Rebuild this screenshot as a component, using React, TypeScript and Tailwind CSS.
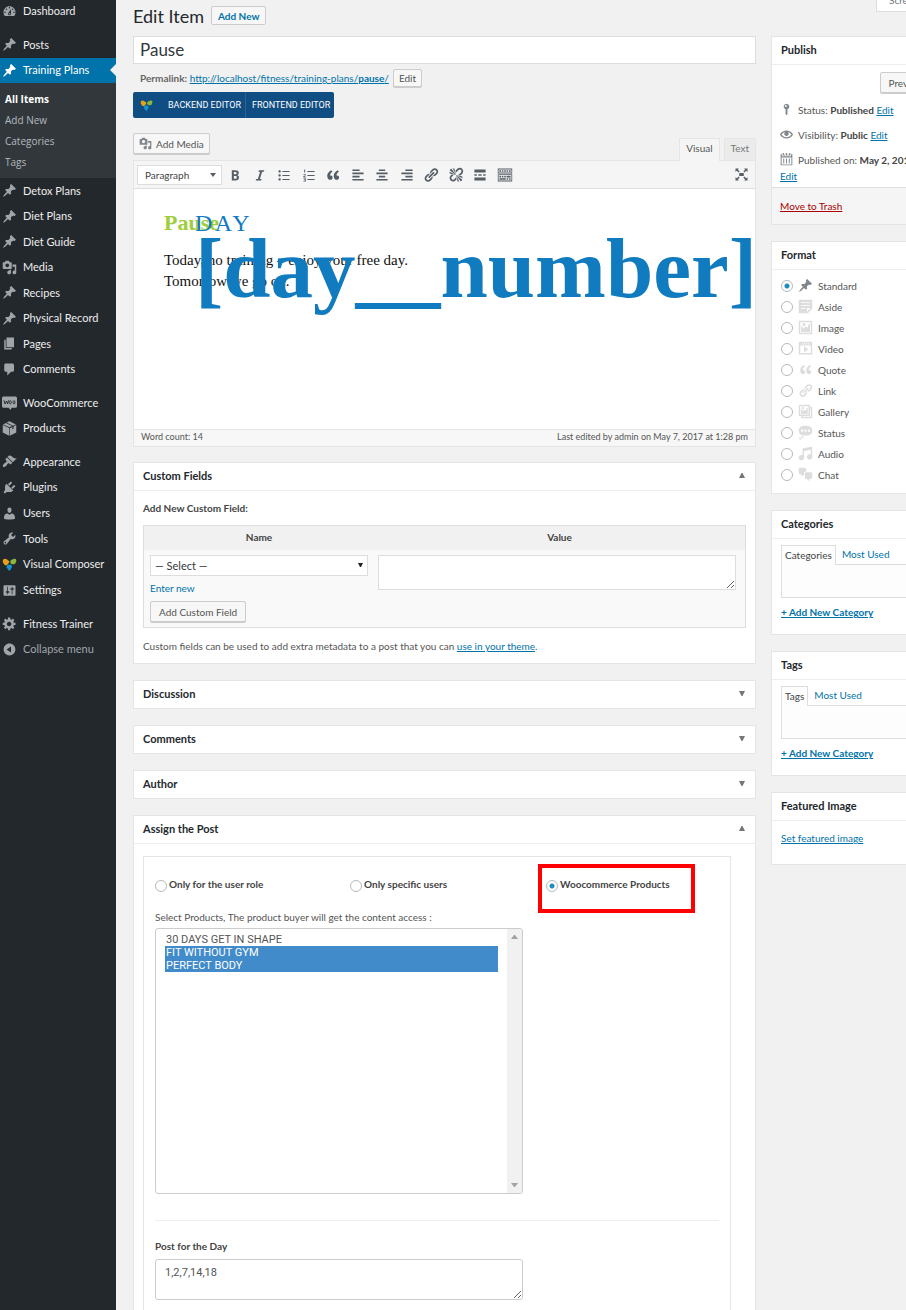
import React from "react";

const PATHS = {
  dashboard:
    "M3.76 16h12.48c1.1-1.37 1.76-3.11 1.76-5 0-4.42-3.58-8-8-8s-8 3.58-8 8c0 1.89.66 3.63 1.76 5zM10 4c.55 0 1 .45 1 1s-.45 1-1 1-1-.45-1-1 .45-1 1-1zM6 6c.55 0 1 .45 1 1s-.45 1-1 1-1-.45-1-1 .45-1 1-1zm8 0c.55 0 1 .45 1 1s-.45 1-1 1-1-.45-1-1 .45-1 1-1zm-5.37 5.55L12 7v6c0 1.1-.9 2-2 2s-2-.9-2-2c0-.57.24-1.08.63-1.45zM4 10c.55 0 1 .45 1 1s-.45 1-1 1-1-.45-1-1 .45-1 1-1zm12 0c.55 0 1 .45 1 1s-.45 1-1 1-1-.45-1-1 .45-1 1-1zm-5 3c0-.55-.45-1-1-1s-1 .45-1 1 .45 1 1 1 1-.45 1-1z",
  pin: "M10.44 3.02l1.82-1.82 6.36 6.35-1.83 1.82c-1.05-.68-2.48-.57-3.41.36l-.75.75c-.92.93-1.04 2.35-.35 3.41l-1.83 1.82-2.41-2.41-2.8 2.79c-.42.42-3.38 2.71-3.8 2.29s1.86-3.39 2.28-3.81l2.79-2.79L4.1 9.36l1.83-1.82c1.05.69 2.48.57 3.4-.36l.75-.75c.93-.92 1.05-2.35.36-3.41z",
  media:
    "M13 11V4c0-.55-.45-1-1-1h-1.67L9 1H5L3.67 3H2c-.55 0-1 .45-1 1v7c0 .55.45 1 1 1h10c.55 0 1-.45 1-1zM7 4.5c1.38 0 2.5 1.12 2.5 2.5S8.38 9.5 7 9.5 4.5 8.38 4.5 7 5.62 4.5 7 4.5zM14 6h5v10.5c0 1.38-1.12 2.5-2.5 2.5S14 17.88 14 16.5s1.12-2.5 2.5-2.5c.17 0 .34.02.5.05V9h-3V6zm-4 8.05V13h2v3.5c0 1.38-1.12 2.5-2.5 2.5S7 17.88 7 16.5 8.12 14 9.5 14c.17 0 .34.02.5.05z",
  page: "M6 15V2h10v13H6zm-1 1h8v2H3V5h2v11z",
  comment:
    "M5 2h9c1.1 0 2 .9 2 2v7c0 1.1-.9 2-2 2h-2l-5 5v-5H5c-1.1 0-2-.9-2-2V4c0-1.1.9-2 2-2z",
  product:
    "M6 2L10 .3l8.600 4.200-4 1.900zM4.900 2.600l8.500 4L10 8.300 1.400 4.500zM1 5.400l8.600 3.900v10.200L1 15.200zM19 5.400l-3.700 1.800v3l-1.500.7v-3l-3.400 1.600v10l8.600-4.300z",
  appearance:
    "M14.48 11.06L7.41 3.99l1.5-1.5c.5-.56 2.3-.47 3.51.32 1.21.8 1.43 1.28 2.91 2.1 1.18.64 2.45 1.26 4.45.85zm-.71.71L6.7 4.7 4.93 6.47c-.39.39-.39 1.02 0 1.41l1.06 1.06c.39.39.39 1.03 0 1.42-.6.6-1.43 1.11-2.21 1.69-.35.26-.7.53-1.01.84C1.43 14.23.4 16.08 1.4 17.07c.99 1 2.84-.03 4.18-1.36.31-.31.58-.66.85-1.02.57-.78 1.08-1.61 1.69-2.21.39-.39 1.02-.39 1.41 0l1.06 1.06c.39.39 1.02.39 1.41 0z",
  plugin:
    "M13.11 4.36L9.87 7.6 8 5.73l3.24-3.24c.35-.34 1.05-.2 1.56.32.52.51.66 1.21.31 1.55zm-8 1.77l.91-1.12 9.01 9.01-1.19.84c-.71.71-2.63 1.16-3.82 1.16H6.14L4.9 17.26c-.59.59-1.54.59-2.12 0-.59-.58-.59-1.53 0-2.12l1.24-1.24v-3.88c0-1.13.4-3.19 1.09-3.89zm7.26 3.97l3.24-3.24c.34-.35 1.04-.21 1.55.31.52.51.66 1.21.31 1.55l-3.24 3.25z",
  user: "M10 9.25c-2.27 0-2.73-3.44-2.73-3.44C7 4.02 7.82 2 9.97 2c2.16 0 2.98 2.02 2.71 3.81 0 0-.41 3.44-2.68 3.44zm0 2.57L12.72 10c2.39 0 4.52 2.33 4.52 4.53v2.49s-3.65 1.13-7.24 1.13c-3.65 0-7.24-1.13-7.24-1.13v-2.49c0-2.25 1.94-4.48 4.47-4.48z",
  tool: "M16.68 9.77c-1.34 1.34-3.3 1.67-4.95.99l-5.41 6.52c-.99.99-2.59.99-3.58 0s-.99-2.59 0-3.57l6.52-5.42c-.68-1.65-.35-3.61.99-4.95 1.28-1.28 3.12-1.62 4.72-1.06l-2.89 2.89 2.82 2.82 2.86-2.87c.53 1.58.18 3.39-1.08 4.65zM3.81 16.21c.4.39 1.04.39 1.43 0 .4-.4.4-1.04 0-1.43-.39-.4-1.03-.4-1.43 0-.39.39-.39 1.03 0 1.43z",
  settings:
    "M18 16V4c0-.55-.45-1-1-1H3c-.55 0-1 .45-1 1v12c0 .55.45 1 1 1h14c.55 0 1-.45 1-1zM8 11h1c.55 0 1 .45 1 1s-.45 1-1 1H8v1.5c0 .28-.22.5-.5.5s-.5-.22-.5-.5V13H6c-.55 0-1-.45-1-1s.45-1 1-1h1V5.5c0-.28.22-.5.5-.5s.5.22.5.5V11zm5-2h-1c-.55 0-1-.45-1-1s.45-1 1-1h1V5.5c0-.28.22-.5.5-.5s.5.22.5.5V7h1c.55 0 1 .45 1 1s-.45 1-1 1h-1v5.5c0 .28-.22.5-.5.5s-.5-.22-.5-.5V9z",
  gear: "M18 12h-2.18c-.17.7-.44 1.35-.81 1.93l1.54 1.54-2.1 2.1-1.54-1.54c-.58.36-1.23.63-1.91.79V19H8v-2.18c-.68-.16-1.33-.43-1.91-.79l-1.54 1.54-2.12-2.12 1.54-1.54c-.36-.58-.63-1.23-.79-1.91H1V9.03h2.17c.16-.7.44-1.35.8-1.94L2.43 5.55l2.1-2.1 1.54 1.54c.58-.37 1.24-.64 1.93-.81V2h3v2.18c.68.16 1.33.43 1.91.79l1.54-1.54 2.12 2.12-1.54 1.54c.36.59.64 1.24.8 1.94H18V12zm-8.5 1.5c1.66 0 3-1.34 3-3s-1.34-3-3-3-3 1.34-3 3 1.34 3 3 3z",
  collapse:
    "M10 2.16c4.33 0 7.84 3.51 7.84 7.84s-3.51 7.84-7.84 7.84S2.16 14.33 2.16 10 5.71 2.16 10 2.16zm2 11.72V6.12L6.18 9.97z",
  bold: "M6 4v13h4.54c1.37 0 2.46-.33 3.26-1 .8-.66 1.2-1.58 1.2-2.77 0-.84-.17-1.51-.51-2.01s-.9-.85-1.67-1.03v-.09c.57-.1 1.02-.4 1.36-.9s.51-1.13.51-1.91c0-1.14-.39-1.98-1.17-2.5C12.75 4.26 11.5 4 9.78 4H6zm2.57 5.15V6.26h1.36c.73 0 1.27.11 1.61.32.34.22.51.58.51 1.07 0 .54-.16.92-.47 1.15s-.82.35-1.51.35h-1.5zm0 2.19h1.6c1.44 0 2.16.53 2.16 1.61 0 .6-.17 1.05-.51 1.34s-.86.43-1.57.43H8.57v-3.38z",
  italic: "M14.78 6h-2.13l-2.8 9h2.12l-.62 2H4.6l.62-2h2.14l2.8-9H8.03l.62-2h6.75z",
  ul: "M4.5 7C3.67 7 3 6.33 3 5.5 3 4.68 3.67 4 4.5 4 5.32 4 6 4.68 6 5.5 6 6.33 5.32 7 4.5 7zM8 5h9v1.3H8V5zm-3.5 7c-.83 0-1.5-.67-1.5-1.5C3 9.68 3.67 9 4.5 9c.82 0 1.5.68 1.5 1.5 0 .83-.68 1.5-1.5 1.5zM8 10h9v1.3H8V10zm-3.5 7c-.83 0-1.5-.67-1.5-1.5 0-.82.67-1.5 1.5-1.5.82 0 1.5.68 1.5 1.5 0 .83-.68 1.5-1.5 1.5zM8 15h9v1.3H8V15z",
  ol: "M4 3h1.2v4H4zM3 9h3v1.6H4.6V12H6v1H3v-1.8h1.4V10H3zM3 14h3v4H3v-.8h1.8v-.8H3.6v-.8h1.2v-.8H3zM8 5h9v1.3H8zM8 10h9v1.3H8zM8 15h9v1.3H8z",
  quote:
    "M9.49 13.22c0-.74-.2-1.38-.61-1.9-.62-.78-1.83-.88-2.53-.72-.29-1.65 1.11-3.75 2.92-4.65L7.88 4c-2.73 1.3-5.42 4.28-4.96 8.05C3.21 14.43 4.59 16 6.54 16c.85 0 1.56-.25 2.12-.75s.83-1.18.83-2.03zm8.05 0c0-.74-.2-1.38-.61-1.9-.63-.78-1.83-.88-2.53-.72-.29-1.65 1.11-3.75 2.92-4.65L15.93 4c-2.73 1.3-5.41 4.28-4.95 8.05.29 2.38 1.66 3.95 3.61 3.95.85 0 1.56-.25 2.12-.75s.83-1.18.83-2.03z",
  left: "M12 5V3H3v2h9zm5 4V7H3v2h14zm-5 4v-2H3v2h9zm5 4v-2H3v2h14z",
  center: "M14 5V3H6v2h8zm3 4V7H3v2h14zm-3 4v-2H6v2h8zm3 4v-2H3v2h14z",
  right: "M17 5V3H8v2h9zm0 4V7H3v2h14zm0 4v-2H8v2h9zm0 4v-2H3v2h14z",
  link: "M17.74 2.76c1.68 1.69 1.68 4.41 0 6.1l-1.53 1.52c-1.12 1.12-2.7 1.47-4.14 1.09l2.62-2.61.76-.77.76-.76c.84-.84.84-2.2 0-3.04-.84-.85-2.2-.85-3.04 0l-.77.76-3.38 3.38c-.37-1.44-.02-3.02 1.1-4.14l1.52-1.53c1.69-1.68 4.42-1.68 6.1 0zM8.59 13.43l5.34-5.34c.42-.42.42-1.1 0-1.52-.44-.43-1.13-.39-1.53 0l-5.33 5.34c-.42.42-.42 1.1 0 1.52.44.43 1.13.39 1.52 0zm-.76 2.29l4.14-4.15c.38 1.44.03 3.02-1.09 4.14l-1.52 1.53c-1.69 1.68-4.41 1.68-6.1 0-1.68-1.68-1.68-4.42 0-6.1l1.53-1.52c1.12-1.12 2.7-1.47 4.14-1.1l-4.14 4.15c-.85.84-.85 2.2 0 3.05.84.84 2.2.84 3.04 0z",
  unlink:
    "M17.74 2.26c1.68 1.69 1.68 4.41 0 6.1l-1.53 1.52c-.32.33-.69.58-1.08.77L13 10l1.69-1.64.76-.77.76-.76c.84-.84.84-2.2 0-3.04-.84-.85-2.2-.85-3.04 0l-.77.76-.76.76L10 7l-.65-2.14c.19-.38.44-.75.77-1.07l1.52-1.53c1.69-1.68 4.42-1.68 6.1 0zM2 4l8 6-6-8zm4-2l4 8-2-8H6zM2 6l8 4-8-2V6zm7.36 7.69L10 13l.74 2.35-1.38 1.39c-1.69 1.68-4.41 1.68-6.1 0-1.68-1.68-1.68-4.42 0-6.1l1.39-1.38L7 10l-.69.64-1.52 1.53c-.85.84-.85 2.2 0 3.04.84.85 2.2.85 3.04 0zM18 16l-8-6 6 8zm-4 2l-4-8 2 8h2zm4-4l-8-4 8 2v2z",
  more: "M17 7V3H3v4h14zM6 11V9H3v2h3zm6 0V9H8v2h4zm5 0V9h-3v2h3zm0 6v-4H3v4h14z",
  sink: "M19 2v6H1V2h18zm-1 5V3H2v4h16zM5 4v2H3V4h2zm3 0v2H6V4h2zm3 0v2H9V4h2zm3 0v2h-2V4h2zm3 0v2h-2V4h2zm2 5v9H1V9h18zm-1 8v-7H2v7h16zM5 11v2H3v-2h2zm3 0v2H6v-2h2zm3 0v2H9v-2h2zm6 0v2h-5v-2h5zm-6 3v2H3v-2h8zm3 0v2h-2v-2h2zm3 0v2h-2v-2h2z",
  expand:
    "M2 2h4.500L5.200 3.500 7.500 6 6.300 7.200 3.700 5 2 6.500zM18 2v4.500L16.300 5l-2.600 2.200L12.500 6l2.300-2.500L13.500 2zM2 18v-4.500L3.700 15l2.600-2.200L7.500 14l-2.300 2.500L6.500 18zM18 18h-4.500l1.300-1.500-2.300-2.500 1.200-1.200 2.600 2.200 1.700-1.500zM7 8h6v4H7z",
  aside:
    "M1 1h18v12l-6 6H1V1zm3 3v1h12V4H4zm0 4v1h12V8H4zm6 5v-1H4v1h6zm2 4l5-5h-5v5z",
  image:
    "M2.25 1h15.5c.69 0 1.25.56 1.25 1.25v15.5c0 .69-.56 1.25-1.25 1.25H2.25C1.56 19 1 18.44 1 17.75V2.25C1 1.56 1.56 1 2.25 1zM17 17V3H3v14h14zM10 6c0-1.1-.9-2-2-2s-2 .9-2 2 .9 2 2 2 2-.9 2-2zm3 5s0-6 3-6v10c0 .55-.45 1-1 1H5c-.55 0-1-.45-1-1V8c2 0 3 4 3 4s1-3 3-3 3 2 3 2z",
  video:
    "M2 1h16c.55 0 1 .45 1 1v16l-18-.02V2c0-.55.45-1 1-1zm4 1L4 5h1l2-3H6zm4 0H9L7 5h1zm3 0h-1l-2 3h1zm3 0h-1l-2 3h1zm1 14V6H3v10h14zM8 7l6 4-6 4V7z",
  gallery:
    "M16 4h1.96c.57 0 1.04.47 1.04 1.04v12.92c0 .57-.47 1.04-1.04 1.04H5.04C4.47 19 4 18.53 4 17.96V16H2.04C1.47 16 1 15.53 1 14.96V2.04C1 1.47 1.47 1 2.04 1h12.92c.57 0 1.04.47 1.04 1.04V4zM3 14h11V3H3v11zm5-8.5C8 4.67 7.33 4 6.5 4S5 4.67 5 5.5 5.67 7 6.5 7 8 6.33 8 5.5zm2 4.5s1-5 3-5v8H4V7c2 0 2 3 2 3s.33-2 2-2 2 2 2 2zm7 7V6h-1v8.96c0 .57-.47 1.04-1.04 1.04H6v1h11z",
  status:
    "M10 1c7 0 9 2.91 9 6.5S17 14 10 14s-9-2.91-9-6.5S3 1 10 1zM5.5 9C6.33 9 7 8.33 7 7.5S6.33 6 5.500 6 4 6.67 4 7.5 4.67 9 5.5 9zM10 9c.83 0 1.5-.67 1.5-1.5S10.83 6 10 6s-1.5.67-1.5 1.5S9.17 9 10 9zm4.5 0c.83 0 1.5-.67 1.5-1.5S15.33 6 14.5 6 13 6.67 13 7.5 13.67 9 14.5 9zM6 14.5c.83 0 1.5.67 1.5 1.5s-.67 1.5-1.5 1.5-1.5-.67-1.5-1.5.67-1.5 1.5-1.500zm-3 2c.83 0 1.5.67 1.5 1.5S3.83 19.5 3 19.5 1.5 18.83 1.5 18 2.17 16.5 3 16.5z",
  audio:
    "M6.99 3.08l11.02-2c.55-.08.99.45.99 1V14.5c0 1.94-1.57 3.5-3.5 3.5S12 16.44 12 14.5c0-1.93 1.57-3.5 3.5-3.5.54 0 1.04.14 1.5.35V5.08l-9 2V16c-.24 1.7-1.74 3-3.5 3C2.57 19 1 17.44 1 15.5 1 13.57 2.57 12 4.5 12c.54 0 1.04.14 1.5.35V4.08c0-.55.44-.91.99-1z",
  chat: "M11 6h-.82C9.07 6 8 7.2 8 8.16V10l-3 3v-3H3c-1.1 0-2-.9-2-2V3c0-1.1.9-2 2-2h6c1.1 0 2 .9 2 2v3zm0 1h6c1.1 0 2 .9 2 2v5c0 1.1-.9 2-2 2h-2v3l-3-3h-1c-1.1 0-2-.9-2-2V9c0-1.1.9-2 2-2z",
  key: "M10 1a4.500 4.500 0 0 1 1.500 8.700V17l-1.500 2-1.500-2V9.700A4.500 4.500 0 0 1 10 1zM9 3a1.500 1.500 0 1 0 0 3 1.500 1.500 0 0 0 0-3z",
  eye: "M19.7 9.4C17.7 6 14 3.9 10 3.9S2.3 6 .3 9.4l-.3.6.3.6c2 3.4 5.7 5.5 9.7 5.5s7.7-2.1 9.7-5.5l.3-.6-.3-.6zM10 14.1c-3.1 0-6-1.6-7.7-4.1C3.6 8 5.7 6.6 8 6.1c-.9.6-1.5 1.7-1.5 2.9 0 1.9 1.6 3.5 3.5 3.5s3.5-1.600 3.500-3.500c0-1.200-.600-2.300-1.500-2.900 2.300.5 4.400 1.900 5.700 3.900-1.700 2.500-4.600 4.100-7.700 4.100z",
  calendar:
    "M4 0h2v4H4zM9 0h2v4H9zM14 0h2v4h-2zM1 2h2v3h4V2h1v3h4V2h1v3h4V2h2v17H1zM2.500 7v10.500h15V7zM5 8.500h1.500v7.500H5zM9.200 8.500h1.500v7.500H9.200zM13.500 8.500H15v7.500h-1.500z",
};

type IconName = keyof typeof PATHS;

function Icon({ name, className = "" }: { name: IconName; className?: string }) {
  return (
    <svg viewBox="0 0 20 20" className={"shrink-0 " + className} fill="currentColor" fillRule="evenodd" aria-hidden="true">
      <path d={PATHS[name]} />
    </svg>
  );
}

function ComposerLogo({ className = "" }: { className?: string }) {
  return (
    <svg viewBox="0 0 20 20" className={"shrink-0 " + className} aria-hidden="true">
      <path d="M1 5.500C1 3 3 2 5 2.500c2 .3 2.500 1.500 4 2.500 1 1 1 2 0 3-1 .7-1 1.500-2 2.500-2 1.200-4 .3-4.600-1.500C1.600 8 1 7 1 5.500z" fill="#e6a11c" />
      <path d="M11 6c.5-2 2-3 4-3 1-.7 3.500-1 4 .5.5 2-.5 2.500-.8 4-.7 2-2.700 2.500-4.200 2-2 0-3.200-1.500-3-3.500z" fill="#88b840" />
      <path d="M6 12.500c.5-2 2.500-3 4.500-2.500 2 0 3 1.500 2.800 3-.3 1.500-1.300 2.500-2 4-.8 1.800-2.500 2-3 0-.3-1.500-2.800-2.500-2.300-4.500z" fill="#1593cc" />
    </svg>
  );
}

function WooLogo({ className = "" }: { className?: string }) {
  return (
    <svg viewBox="0 0 20 20" className={"shrink-0 " + className} aria-hidden="true">
      <path d="M2 2h16a2 2 0 0 1 2 2v11a2 2 0 0 1-2 2h-5l-2 3-2-3H2a2 2 0 0 1-2-2V4a2 2 0 0 1 2-2z" fill="currentColor" />
      <path d="M2.500 7l1.500 5 2-4 1.500 4 1.200-5M11 7.500a1.300 2.200 0 1 0 .1 0zM16 7.500a1.300 2.200 0 1 0 .1 0z" fill="none" stroke="#23282d" strokeWidth="1.200" />
    </svg>
  );
}

type Item = { label: string; icon: IconName | "woo" | "vc"; active?: boolean; muted?: boolean };

const GROUP_MAIN: Item[] = [
  { label: "Posts", icon: "pin" },
  { label: "Training Plans", icon: "pin", active: true },
];
const GROUP_CONTENT: Item[] = [
  { label: "Detox Plans", icon: "pin" },
  { label: "Diet Plans", icon: "pin" },
  { label: "Diet Guide", icon: "pin" },
  { label: "Media", icon: "media" },
  { label: "Recipes", icon: "pin" },
  { label: "Physical Record", icon: "pin" },
  { label: "Pages", icon: "page" },
  { label: "Comments", icon: "comment" },
];
const GROUP_SHOP: Item[] = [
  { label: "WooCommerce", icon: "woo" },
  { label: "Products", icon: "product" },
];
const GROUP_ADMIN: Item[] = [
  { label: "Appearance", icon: "appearance" },
  { label: "Plugins", icon: "plugin" },
  { label: "Users", icon: "user" },
  { label: "Tools", icon: "tool" },
  { label: "Visual Composer", icon: "vc" },
  { label: "Settings", icon: "settings" },
];
const GROUP_LAST: Item[] = [
  { label: "Fitness Trainer", icon: "gear" },
  { label: "Collapse menu", icon: "collapse", muted: true },
];

function MenuItem({ item }: { item: Item }) {
  const tone = item.active ? "bg-[#0073aa] text-white" : item.muted ? "text-[#a0a5aa]" : "text-[#eeeeee]";
  const iconTone = item.active ? "text-white" : "text-[#a0a5aa]";
  return (
    <a href="#" className={"relative flex items-center gap-1.5 pl-0.5 " + tone}>
      {item.icon === "woo" ? (
        <WooLogo className={"size-[15px] " + iconTone} />
      ) : item.icon === "vc" ? (
        <ComposerLogo className="size-[15px]" />
      ) : (
        <Icon name={item.icon} className={"size-[15px] " + iconTone} />
      )}
      <span>{item.label}</span>
      {item.active && (
        <span className="absolute right-0 top-1/2 -translate-y-1/2 border-y-[6px] border-r-[6px] border-y-transparent border-r-[#f1f1f1]" />
      )}
    </a>
  );
}

function Sidebar() {
  return (
    <nav className="flex w-[116px] shrink-0 flex-col bg-[#23282d] text-[11px] leading-4">
      <div className="mb-[10px] grid h-[22px]">
        <MenuItem item={{ label: "Dashboard", icon: "dashboard" }} />
      </div>
      <div className="grid h-[51px] auto-rows-fr">
        {GROUP_MAIN.map((i) => <MenuItem key={i.label} item={i} />)}
      </div>
      <div className="flex flex-col bg-[#32373c] pb-[5px] pl-[5px] pt-1.5 font-['Open_Sans',sans-serif] text-[10px] leading-[21px] text-[#b4b9be]">
        <a href="#" className="font-bold text-white">All Items</a>
        <a href="#">Add New</a>
        <a href="#">Categories</a>
        <a href="#">Tags</a>
      </div>
      <div className="mb-2 grid h-[204px] auto-rows-fr">
        {GROUP_CONTENT.map((i) => <MenuItem key={i.label} item={i} />)}
      </div>
      <div className="mb-2 grid h-[51px] auto-rows-fr">
        {GROUP_SHOP.map((i) => <MenuItem key={i.label} item={i} />)}
      </div>
      <div className="mb-2 grid h-[154px] auto-rows-fr">
        {GROUP_ADMIN.map((i) => <MenuItem key={i.label} item={i} />)}
      </div>
      <div className="grid h-[51px] auto-rows-fr">
        {GROUP_LAST.map((i) => <MenuItem key={i.label} item={i} />)}
      </div>
    </nav>
  );
}

const BUTTON = "rounded-[2px] border border-[#cccccc] bg-[#f7f7f7] text-[#555555] shadow-[0_1px_0_#cccccc]";
const LINK = "text-[#0073aa] underline";

function Triangle({ up = false }: { up?: boolean }) {
  return (
    <svg viewBox="0 0 6 5" className="h-[5px] w-1.5" fill="#72777c" aria-hidden="true">
      <path d={up ? "M0 5h6L3.500 0h-1z" : "M0 0h6L3.500 5h-1z"} />
    </svg>
  );
}

function Panel({
  title,
  toggle,
  className = "",
  children,
}: {
  title: string;
  toggle?: "open" | "closed";
  className?: string;
  children?: React.ReactNode;
}) {
  return (
    <section className={"flex flex-col border border-[#e5e5e5] bg-white " + className}>
      <header
        className={
          "flex shrink-0 items-center justify-between px-[9px] pb-0.5 " +
          (toggle === "closed" ? "h-[27px]" : "h-7 border-b border-[#eeeeee]")
        }
      >
        <h2 className="text-[11px] font-bold leading-4 text-[#23282d]">{title}</h2>
        {toggle && (
          <button type="button" aria-label={"Toggle " + title} className="flex h-4 w-2 items-center justify-center">
            <Triangle up={toggle === "open"} />
          </button>
        )}
      </header>
      {children}
    </section>
  );
}

const TOOLS: { name: IconName; label: string }[] = [
  { name: "bold", label: "Bold" },
  { name: "italic", label: "Italic" },
  { name: "ul", label: "Bulleted list" },
  { name: "ol", label: "Numbered list" },
  { name: "quote", label: "Blockquote" },
  { name: "left", label: "Align left" },
  { name: "center", label: "Align center" },
  { name: "right", label: "Align right" },
  { name: "link", label: "Insert link" },
  { name: "unlink", label: "Remove link" },
  { name: "more", label: "Read More tag" },
  { name: "sink", label: "Toolbar toggle" },
];

function Editor() {
  return (
    <div>
      <div className="flex h-[27px] items-end justify-between">
        <button type="button" className={BUTTON + " mb-1.5 flex h-[21px] items-center gap-1 px-[5px] leading-4"}>
          <Icon name="media" className="size-[13px] text-[#82878c]" />
          Add Media
        </button>
        <div className="-mb-px flex gap-1">
          <button type="button" className="z-10 h-[23px] border border-b-0 border-[#e5e5e5] bg-[#f5f5f5] px-1.5 pb-1 text-[#555555]">Visual</button>
          <button type="button" className="h-[23px] border border-[#e5e5e5] bg-[#ebebeb] px-1.5 pb-1 text-[#777777]">Text</button>
        </div>
      </div>
      <div className="border border-[#e5e5e5] bg-white">
        <div className="flex h-7 items-center border-b border-[#dddddd] bg-[#f5f5f5] pl-[3px] pr-1.5">
          <div className="relative mr-[5px] flex">
            <select aria-label="Text style" className="h-5 w-[85px] appearance-none border border-[#dddddd] bg-white pl-[7px] text-[#444444]">
              <option>Paragraph</option>
            </select>
            <span className="pointer-events-none absolute right-1.5 top-2">
              <svg viewBox="0 0 6 4" className="h-1 w-1.5" fill="#555d66" aria-hidden="true">
                <path d="M0 0h6L3 4z" />
              </svg>
            </span>
          </div>
          <div className="flex w-[286px] justify-between">
            {TOOLS.map((t) => (
              <button key={t.name} type="button" aria-label={t.label} className="text-[#555d66]">
                <Icon name={t.name} className="block size-4" />
              </button>
            ))}
          </div>
          <button type="button" aria-label="Distraction-free writing" className="ml-auto text-[#555d66]">
            <Icon name="expand" className="block size-[15px]" />
          </button>
        </div>
        <div className="relative h-60 overflow-hidden px-[30px] pt-[22px] font-['Liberation_Serif',serif]">
          <h3 className="mb-[15px] text-[22px] font-bold leading-6 text-[#9ecd3d]">Pause</h3>
          <p className="text-[15px] leading-[21px] text-[#111111]">
            Today, no training – enjoy your free day.
            <br />
            Tomorrow we go on.
          </p>
          <div className="absolute left-[61px] top-5 text-2xl leading-7 tracking-widest text-[#117bc0]">DAY</div>
          <div className="absolute left-[61px] top-[37px] text-[85px] font-bold leading-none text-[#117bc0]">[day__number]</div>
        </div>
        <div className="flex h-[17px] items-center justify-between border-t border-[#e5e5e5] bg-[#f7f7f7] px-[7px] pb-0.5 text-[9px] text-[#555555]">
          <span>Word count: 14</span>
          <span>Last edited by admin on May 7, 2017 at 1:28 pm</span>
        </div>
      </div>
    </div>
  );
}

const RADIO =
  "size-3 shrink-0 appearance-none rounded-full border border-[#b4b9be] bg-white checked:bg-[radial-gradient(circle,#1e8cbe_2px,transparent_3px)]";

function CustomFields() {
  return (
    <Panel title="Custom Fields" toggle="open">
      <div className="px-[9px] pb-[9px] pt-[9px]">
        <p className="mb-[9px] font-bold leading-4 text-[#444444]">Add New Custom Field:</p>
        <table className="w-full border-separate border-spacing-0 border border-[#dddddd] bg-[#f9f9f9]">
          <thead>
            <tr className="h-6 bg-[#f1f1f1] text-[#444444]">
              <th className="w-[230px] pb-0.5 font-bold">Name</th>
              <th className="pb-0.5 font-bold">Value</th>
            </tr>
          </thead>
          <tbody>
            <tr>
              <td className="px-1.5 pb-[5px] pt-[5px] align-top">
                <div className="relative mb-[3px]">
                  <select
                    aria-label="Name"
                    className="block h-[21px] w-full appearance-none border border-[#dddddd] bg-white pl-1 text-[11px] text-[#32373c]"
                  >
                    <option>— Select —</option>
                  </select>
                  <span className="pointer-events-none absolute right-[5px] top-2">
                    <svg viewBox="0 0 5 4" className="block h-1 w-[5px]" fill="#222" aria-hidden="true">
                      <path d="M0 0h5L3 4H2z" />
                    </svg>
                  </span>
                </div>
                <a href="#" className="block leading-[18px] text-[#0073aa]">Enter new</a>
                <button type="button" className={BUTTON + " mt-1 block h-[21px] px-2 leading-4"}>Add Custom Field</button>
              </td>
              <td className="px-[9px] pl-1 pt-[5px] align-top">
                <textarea aria-label="Value" className="block h-[35px] w-full resize border border-[#dddddd] bg-white" />
              </td>
            </tr>
          </tbody>
        </table>
        <p className="mt-[10px] leading-4 text-[#555555]">
          Custom fields can be used to add extra metadata to a post that you can{" "}
          <a href="#" className={LINK}>use in your theme</a>.
        </p>
      </div>
    </Panel>
  );
}

const OPTION = "h-[13px] min-h-[13px] p-0 pl-px leading-[13px]";
const OPTION_ON = OPTION + " bg-[linear-gradient(#428bca,#428bca)] text-white!";

function AssignPost() {
  return (
    <Panel title="Assign the Post" toggle="open" className="flex-1 border-b-0">
      <div className="mr-6 ml-[9px] mt-3 flex-1 border border-b-0 border-[#e5e5e5] px-[11px] pt-[7px] text-[#444444]">
        <div className="grid h-[49px] grid-cols-[195px_188px_1fr] font-bold">
          <label className="flex items-start gap-0.5 pt-3 leading-4">
            <input type="radio" name="access" className={RADIO + " mt-1"} />
            Only for the user role
          </label>
          <label className="flex items-start gap-0.5 pt-3 leading-4">
            <input type="radio" name="access" className={RADIO + " mt-1"} />
            Only specific users
          </label>
          <label className="flex w-[157px] items-start gap-0.5 border-4 border-[#ff0000] pl-1 pt-2 leading-4">
            <input type="radio" name="access" defaultChecked className={RADIO + " mt-1"} />
            Woocommerce Products
          </label>
        </div>
        <label htmlFor="products" className="-mt-1 mb-[3px] block leading-4 text-[#555555]">
          Select Products, The product buyer will get the content access :
        </label>
        <div className="flex h-[266px] w-[368px] overflow-hidden rounded-[3px] border border-[#cccccc] bg-white">
          <select
            id="products"
            multiple
            defaultValue={["b", "c"]}
            className="min-w-0 flex-1 overflow-hidden bg-transparent px-[9px] py-1 font-['Roboto',sans-serif] text-[11px] text-[#555555]"
          >
            <option value="a" className={OPTION}>30 DAYS GET IN SHAPE</option>
            <option value="b" className={OPTION_ON}>FIT WITHOUT GYM</option>
            <option value="c" className={OPTION_ON}>PERFECT BODY</option>
          </select>
          <div className="flex w-[15px] flex-col items-center justify-between bg-[#f1f1f1] py-1.5">
            <svg viewBox="0 0 7 4" className="h-1 w-[7px]" fill="#a3a3a3" aria-hidden="true"><path d="M0 4h7L4 0H3z" /></svg>
            <svg viewBox="0 0 7 4" className="h-1 w-[7px]" fill="#a3a3a3" aria-hidden="true"><path d="M0 0h7L4 4H3z" /></svg>
          </div>
        </div>
        <hr className="mb-[17px] mt-[26px] border-t border-[#eeeeee]" />
        <label htmlFor="days" className="mb-[5px] block font-bold leading-4">Post for the Day</label>
        <textarea
          id="days"
          defaultValue="1,2,7,14,18"
          className="block h-[41px] w-[368px] resize rounded-[3px] border border-[#cccccc] bg-white px-[9px] py-[5px] font-['Roboto',sans-serif] text-[11px] leading-4 text-[#555555]"
        />
      </div>
    </Panel>
  );
}

function MainColumn() {
  return (
    <main className="flex min-w-[623px] flex-1 flex-col">
      <div className="flex h-9 items-center gap-[7px] pb-[5px]">
        <h1 className="text-lg leading-6 text-[#23282d]">Edit Item</h1>
        <a href="#" className="flex h-[19px] items-center rounded-[2px] border border-[#cccccc] bg-[#f7f7f7] px-1.5 font-bold text-[#0073aa]">Add New</a>
      </div>
      <input
        aria-label="Title"
        defaultValue="Pause"
        className="h-7 w-full border border-[#dddddd] bg-white px-1.5 pb-0.5 text-[17px] text-[#32373c]"
      />
      <div className="flex h-7 items-center gap-1 px-[7px] text-[#666666]">
        <span><strong>Permalink:</strong>{" "}
          <a href="#" className={LINK}>http://localhost/fitness/training-plans/<b>pause</b>/</a>
        </span>
        <button type="button" className={BUTTON + " h-[18px] px-[5px]"}>Edit</button>
      </div>
      <div className="mb-[15px] flex h-[26px] w-fit items-stretch rounded-[2px] bg-[#0f4d83] font-['Roboto',sans-serif] text-[9px] text-white">
        <span className="flex items-center pl-[7px] pr-[11px]"><ComposerLogo className="size-[13px]" /></span>
        <button type="button" className="border-r border-[#2a6496] px-1">BACKEND EDITOR</button>
        <button type="button" className="pl-1.5 pr-1">FRONTEND EDITOR</button>
      </div>
      <Editor />
      <div className="mt-[15px] flex flex-1 flex-col gap-4">
        <CustomFields />
        <Panel title="Discussion" toggle="closed" />
        <Panel title="Comments" toggle="closed" />
        <Panel title="Author" toggle="closed" />
        <AssignPost />
      </div>
    </main>
  );
}

const FORMATS: { label: string; icon: IconName }[] = [
  { label: "Standard", icon: "pin" },
  { label: "Aside", icon: "aside" },
  { label: "Image", icon: "image" },
  { label: "Video", icon: "video" },
  { label: "Quote", icon: "quote" },
  { label: "Link", icon: "link" },
  { label: "Gallery", icon: "gallery" },
  { label: "Status", icon: "status" },
  { label: "Audio", icon: "audio" },
  { label: "Chat", icon: "chat" },
];

function Taxonomy({ title }: { title: string }) {
  return (
    <Panel title={title}>
      <div className="px-[9px] pb-3.5 pt-1.5">
        <div className="-mb-px flex">
          <button type="button" className="relative h-5 border border-b-0 border-[#dddddd] bg-[#fdfdfd] px-[3px] pb-0.5 text-[#444444]">{title}</button>
          <button type="button" className="h-5 px-1.5 pb-0.5 text-[#0073aa]">Most Used</button>
        </div>
        <div className="h-[34px] border border-[#dddddd] bg-[#fdfdfd]" />
        <a href="#" className="mt-1.5 block w-fit font-bold leading-4 text-[#0073aa] underline">+ Add New Category</a>
      </div>
    </Panel>
  );
}

function SideColumn() {
  return (
    <aside className="flex w-[210px] shrink-0 flex-col">
      <div className="mb-6 flex h-3 items-end overflow-hidden pl-[105px]">
        <button type="button" className="h-6 whitespace-nowrap border border-[#dddddd] bg-white px-3 text-[#72777c]">Screen Options</button>
      </div>
      <div className="flex flex-col gap-4">
        <Panel title="Publish">
          <div className="px-2 pt-[7px] text-[#555555]">
            <div className="flex justify-end">
              <button type="button" className={BUTTON + " h-[21px] w-[92px] whitespace-nowrap leading-4"}>Preview Changes</button>
            </div>
            <div className="mt-1 flex h-[25px] items-center gap-[5px]">
              <Icon name="key" className="size-[13px] text-[#82878c]" />
              <span>Status: <strong className="text-[#444444]">Published</strong> <a href="#" className={LINK}>Edit</a></span>
            </div>
            <div className="flex h-[25px] items-center gap-[5px]">
              <Icon name="eye" className="size-[13px] text-[#82878c]" />
              <span>Visibility: <strong className="text-[#444444]">Public</strong> <a href="#" className={LINK}>Edit</a></span>
            </div>
            <div className="flex h-[25px] items-center gap-[5px]">
              <Icon name="calendar" className="size-[13px] text-[#82878c]" />
              <span>Published on: <strong className="text-[#444444]">May 2, 2017</strong></span>
            </div>
            <a href="#" className={LINK + " -mt-1 mb-[3px] block leading-4"}>Edit</a>
          </div>
          <div className="flex h-[37px] items-center border-t border-[#dddddd] bg-[#f5f5f5] px-2">
            <a href="#" className="text-[#aa0000] underline">Move to Trash</a>
          </div>
        </Panel>
        <Panel title="Format">
          <div className="flex flex-col px-[9px] pb-2 pt-[5px]">
            {FORMATS.map((f, i) => (
              <label key={f.label} className="flex h-[21px] items-center gap-[5px] text-[#555555]">
                <input type="radio" name="format" defaultChecked={i === 0} className={RADIO} />
                <Icon name={f.icon} className={i === 0 ? "size-[15px] text-[#82878c]" : "size-[15px] text-[#dddddd]"} />
                {f.label}
              </label>
            ))}
          </div>
        </Panel>
        <Taxonomy title="Categories" />
        <Taxonomy title="Tags" />
        <Panel title="Featured Image">
          <div className="px-[9px] pb-[18px] pt-[9px]">
            <a href="#" className={LINK + " block leading-4"}>Set featured image</a>
          </div>
        </Panel>
      </div>
    </aside>
  );
}

export default function App() {
  return (
    <div className="flex min-h-screen overflow-hidden bg-[#f1f1f1] font-['Lato',sans-serif] text-[10px] leading-4">
      <Sidebar />
      <div className="flex flex-1 gap-[15px] pl-[17px]">
        <MainColumn />
        <SideColumn />
      </div>
    </div>
  );
}
